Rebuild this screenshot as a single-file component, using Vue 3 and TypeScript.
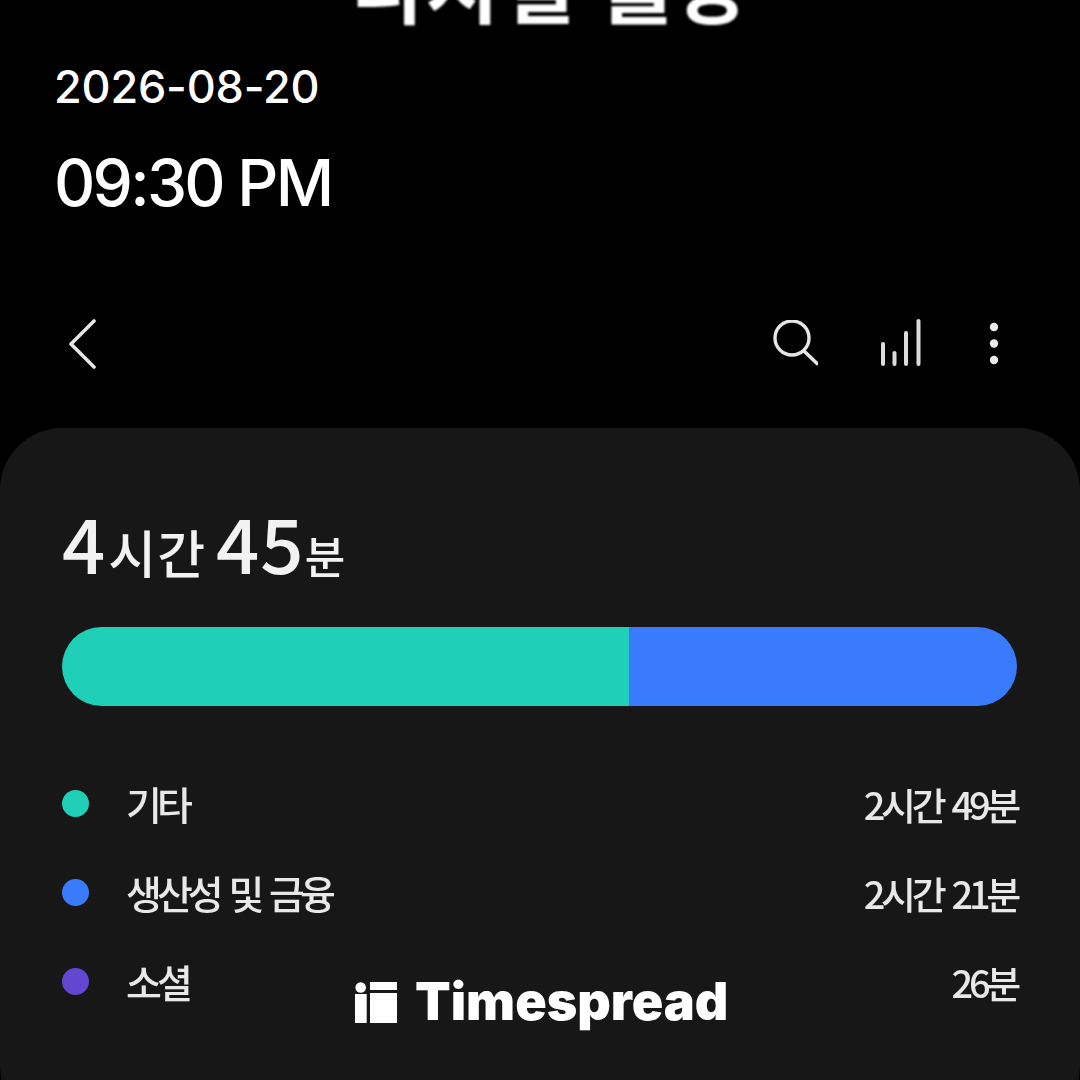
<script setup lang="ts">
// 앱별 사용 시간 목록
const items = [
  { name: '기타', time: '2시간 49분', color: '#1fcfb8' },
  { name: '생산성 및 금융', time: '2시간 21분', color: '#3a7bfd' },
  { name: '소셜', time: '26분', color: '#6347d0' },
]
</script>

<template>
  <div class="page">
    <div class="title">디지털 웰빙</div>

    <div class="stamp">
      <div class="date">2026-08-20</div>
      <div class="clock">09:30 PM</div>
    </div>

    <div class="toolbar">
      <svg class="back" width="30" height="50" viewBox="0 0 30 50">
        <path d="M26 2 3 25l23 23" fill="none" stroke="#e6e6e6" stroke-width="3.6" stroke-linecap="round" stroke-linejoin="round" />
      </svg>
      <div class="actions">
        <svg width="48" height="48" viewBox="0 0 48 48">
          <circle cx="22" cy="18" r="17" fill="none" stroke="#e6e6e6" stroke-width="3.4" />
          <path d="m34 31 13 12.500" fill="none" stroke="#e6e6e6" stroke-width="3.6" stroke-linecap="round" />
        </svg>
        <svg width="44" height="50" viewBox="0 0 44 50">
          <g fill="none" stroke="#dcdcdc" stroke-width="4" stroke-linecap="round">
            <path d="M2 25v20M13.500 34v11M25 14v31M37.500 2v43" />
          </g>
        </svg>
        <svg width="12" height="44" viewBox="0 0 12 44">
          <circle cx="6" cy="5" r="4.200" fill="#ececec" />
          <circle cx="6" cy="21.500" r="4.200" fill="#ececec" />
          <circle cx="6" cy="38" r="4.200" fill="#ececec" />
        </svg>
      </div>
    </div>

    <section class="card">
      <div class="total">
        <b class="hour">4</b><span>시간</span><b class="min">45</b><span class="small">분</span>
      </div>

      <div class="bar">
        <div class="bar-a"></div>
        <div class="bar-b"></div>
      </div>

      <ul class="legend">
        <li v-for="item in items" :key="item.name">
          <i class="dot" :style="{ background: item.color }"></i>
          <span class="name">{{ item.name }}</span>
          <span class="time">{{ item.time }}</span>
        </li>
      </ul>
    </section>

    <!-- 워터마크 -->
    <div class="mark">
      <svg width="42" height="41" viewBox="0 0 42 41">
        <circle cx="5.700" cy="5.500" r="5.300" fill="#fff" />
        <rect x="0" y="12" width="11.700" height="29" fill="#fff" />
        <rect x="15" y="0" width="27" height="8" fill="#fff" />
        <rect x="15" y="11" width="27" height="30" fill="#fff" />
      </svg>
      <span>Timespread</span>
    </div>
  </div>
</template>

<style>
html,
body {
  background: #000;
}
</style>

<style scoped>
.page {
  position: relative;
  width: 1080px;
  height: 1080px;
  overflow: hidden;
  background: #000;
  color: #fff;
  font-family: Inter, "Noto Sans CJK KR", sans-serif;
}

.title {
  height: 22px;
  margin-left: 350px;
  display: flex;
  align-items: flex-end;
  font-family: "Noto Sans CJK KR", sans-serif;
  font-size: 80px;
  font-weight: 700;
  line-height: 1;
  letter-spacing: 2px;
  white-space: nowrap;
  filter: blur(0.8px);
}

.stamp {
  margin-top: 34px;
  padding-left: 54px;
}

.date {
  font-size: 45px;
  font-weight: 500;
  line-height: 62px;
  letter-spacing: -0.200px;
}

.clock {
  margin-top: 28px;
  font-size: 64px;
  font-weight: 500;
  line-height: 74px;
  letter-spacing: -2.700px;
}

.toolbar {
  display: flex;
  align-items: center;
  justify-content: space-between;
  margin-top: 99px;
  padding: 0 80px 0 68px;
}

.actions {
  display: flex;
  align-items: center;
  gap: 63px;
}

.card {
  margin-top: 59px;
  height: 700px;
  padding: 80px 63px 0 62px;
  border-radius: 62px;
  background: #171717;
  box-sizing: border-box;
}

.total {
  display: flex;
  align-items: baseline;
  height: 66px;
  font-family: "Noto Sans CJK KR", sans-serif;
  font-weight: 500;
  color: #f2f2f2;
  filter: blur(0.6px);
  white-space: pre;
  line-height: 66px;
}

.total b {
  font-size: 76px;
  font-weight: 500;
}

.total b.hour {
  letter-spacing: 3px;
}

.total b.min {
  margin-left: 10px;
  letter-spacing: 1px;
}

.total span {
  font-size: 52px;
  letter-spacing: 1px;
}

.total span.small {
  font-size: 44px;
}

.bar {
  display: flex;
  height: 79px;
  margin-top: 53px;
  border-radius: 40px;
  overflow: hidden;
}

.bar-a {
  width: 567px;
  background: #1fcfb8;
}

.bar-b {
  flex: 1;
  background: #3a7bfd;
}

.legend {
  display: flex;
  flex-direction: column;
  gap: 47px;
  margin: 76px 0 0;
  padding: 0;
  list-style: none;
}

.legend li {
  display: flex;
  align-items: center;
  height: 42px;
  font-family: "Noto Sans CJK KR", sans-serif;
  font-size: 39px;
  font-weight: 500;
  color: #e8e8e8;
  filter: blur(0.5px);
}

.dot {
  width: 27px;
  height: 27px;
  margin-right: 37px;
  border-radius: 50%;
}

.name {
  flex: 1;
  letter-spacing: -5px;
  word-spacing: 6px;
}

.time {
  font-size: 38px;
  letter-spacing: -4.300px;
  word-spacing: 5px;
}

.mark {
  position: absolute;
  left: 355px;
  top: 972px;
  display: flex;
  align-items: center;
  gap: 18px;
  font-family: Inter, sans-serif;
  font-size: 52px;
  font-weight: 900;
  line-height: 60px;
  color: #fff;
}
</style>
